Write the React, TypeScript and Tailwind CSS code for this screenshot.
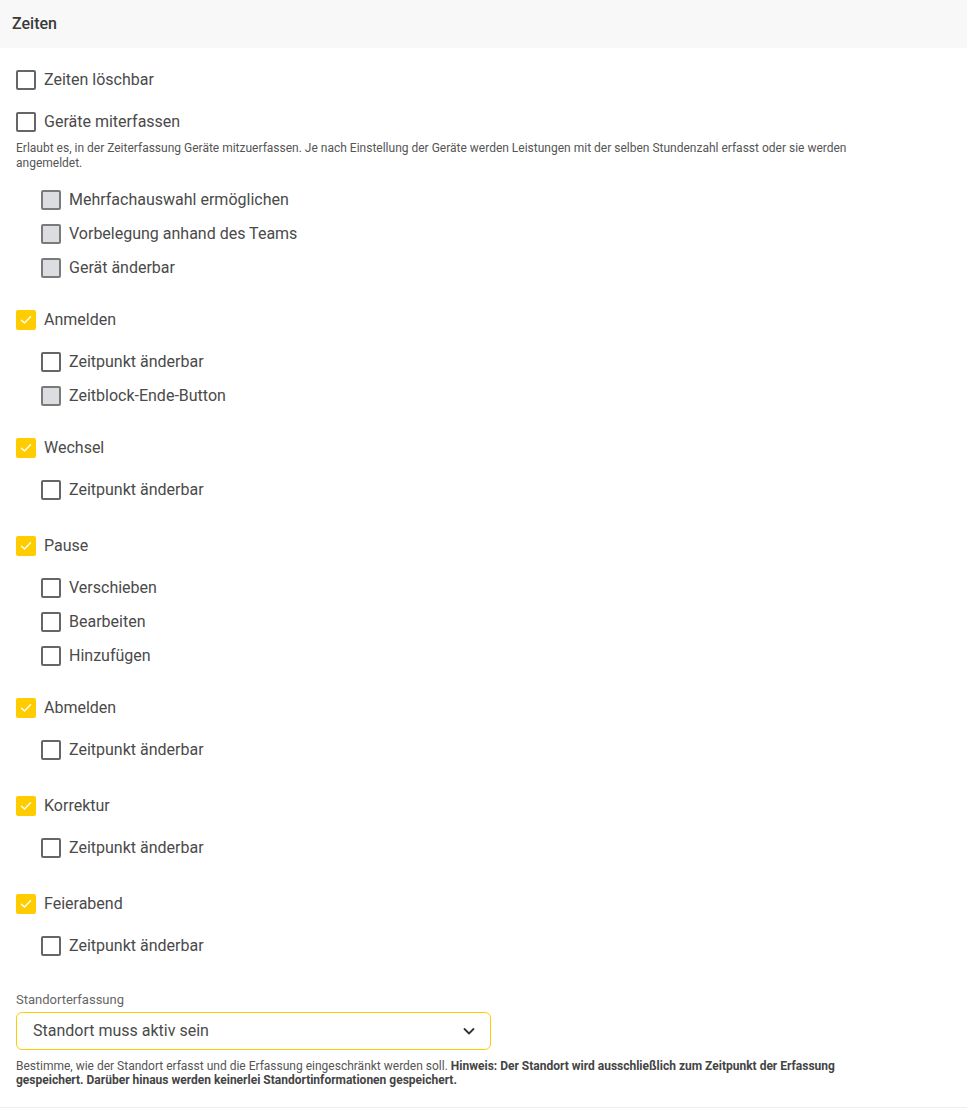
import React from "react"

type Item = {
  label: string
  checked?: boolean
  disabled?: boolean
}

type Group = {
  item: Item
  subs: Item[]
  gap: string
}

const groups: Group[] = [
  {
    item: { label: "Anmelden", checked: true },
    subs: [{ label: "Zeitpunkt änderbar" }, { label: "Zeitblock-Ende-Button", disabled: true }],
    gap: "mt-[18px]",
  },
  {
    item: { label: "Wechsel", checked: true },
    subs: [{ label: "Zeitpunkt änderbar" }],
    gap: "mt-[18px]",
  },
  {
    item: { label: "Pause", checked: true },
    subs: [{ label: "Verschieben" }, { label: "Bearbeiten" }, { label: "Hinzufügen" }],
    gap: "mt-[22px]",
  },
  {
    item: { label: "Abmelden", checked: true },
    subs: [{ label: "Zeitpunkt änderbar" }],
    gap: "mt-[18px]",
  },
  {
    item: { label: "Korrektur", checked: true },
    subs: [{ label: "Zeitpunkt änderbar" }],
    gap: "mt-[22px]",
  },
  {
    item: { label: "Feierabend", checked: true },
    subs: [{ label: "Zeitpunkt änderbar" }],
    gap: "mt-[22px]",
  },
]

function Box({ checked, disabled }: { checked?: boolean; disabled?: boolean }) {
  if (checked) {
    return (
      <span className="flex h-5 w-5 shrink-0 items-center justify-center rounded-[2px] bg-[#ffcc00]">
        <svg width="14" height="14" viewBox="0 0 14 14" fill="none">
          <path d="M2.5 7.2l3 2.9 6-6.3" stroke="#fff" strokeWidth="1.4" strokeLinecap="round" strokeLinejoin="round" />
        </svg>
      </span>
    )
  }
  return (
    <span
      className={
        disabled
          ? "h-5 w-5 shrink-0 rounded-[2px] border-2 border-[#7a7a7a] bg-[#dcdde1]"
          : "h-5 w-5 shrink-0 rounded-[2px] border-2 border-[#666] bg-white"
      }
    />
  )
}

function Row({ item, sub }: { item: Item; sub?: boolean }) {
  return (
    <div className={sub ? "flex h-[34px] items-center gap-2 pl-[25px]" : "flex h-[34px] items-center gap-2"}>
      <Box checked={item.checked} disabled={item.disabled} />
      <span className="text-[16px] text-[#4a4a4a]">{item.label}</span>
    </div>
  )
}

export default function App() {
  return (
    <div className="min-h-[1108px] bg-white font-['Roboto',sans-serif] text-[#4a4a4a]">
      <div className="border-b border-[#eeeeee]">
        <div className="flex h-12 items-center bg-[#f8f8f8] px-3">
          <h2 className="text-[16px] font-medium text-[#3a3a3a]">Zeiten</h2>
        </div>

        <div className="px-4 pt-[15px] pb-[20px]">
          <Row item={{ label: "Zeiten löschbar" }} />
          <div className="mt-2">
            <Row item={{ label: "Geräte miterfassen" }} />
          </div>
          <p className="mt-[2px] text-[12px] leading-[15px] text-[#555]">
            Erlaubt es, in der Zeiterfassung Geräte mitzuerfassen. Je nach Einstellung der Geräte werden Leistungen mit der selben Stundenzahl erfasst oder sie werden
            <br />
            angemeldet.
          </p>
          <div className="mt-[12px]">
            <Row sub item={{ label: "Mehrfachauswahl ermöglichen", disabled: true }} />
            <Row sub item={{ label: "Vorbelegung anhand des Teams", disabled: true }} />
            <Row sub item={{ label: "Gerät änderbar", disabled: true }} />
          </div>

          {groups.map((g) => (
            <div key={g.item.label} className={g.gap}>
              <Row item={g.item} />
              <div className="mt-2">
                {g.subs.map((s) => (
                  <Row key={s.label} sub item={s} />
                ))}
              </div>
            </div>
          ))}

          <div className="mt-[29px]">
            <label className="block text-[13px] leading-4 text-[#666]">Standorterfassung</label>
            <div className="mt-[4px] flex h-[38px] w-[475px] items-center justify-between rounded-[6px] border border-[#ffcc00] pl-4 pr-[14px]">
              <span className="text-[16px] text-[#4a4a4a]">Standort muss aktiv sein</span>
              <svg width="14" height="14" viewBox="0 0 14 14" fill="none">
                <path d="M2.5 5l4.5 4.5 4.5-4.5" stroke="#333" strokeWidth="1.8" strokeLinecap="round" strokeLinejoin="round" />
              </svg>
            </div>
            <p className="mt-[9px] text-[12px] leading-[14px] text-[#555]">
              Bestimme, wie der Standort erfasst und die Erfassung eingeschränkt werden soll.{" "}
              <strong className="font-bold text-[#444]">
                Hinweis: Der Standort wird ausschließlich zum Zeitpunkt der Erfassung
                <br />
                gespeichert. Darüber hinaus werden keinerlei Standortinformationen gespeichert.
              </strong>
            </p>
          </div>
        </div>
      </div>
    </div>
  )
}
